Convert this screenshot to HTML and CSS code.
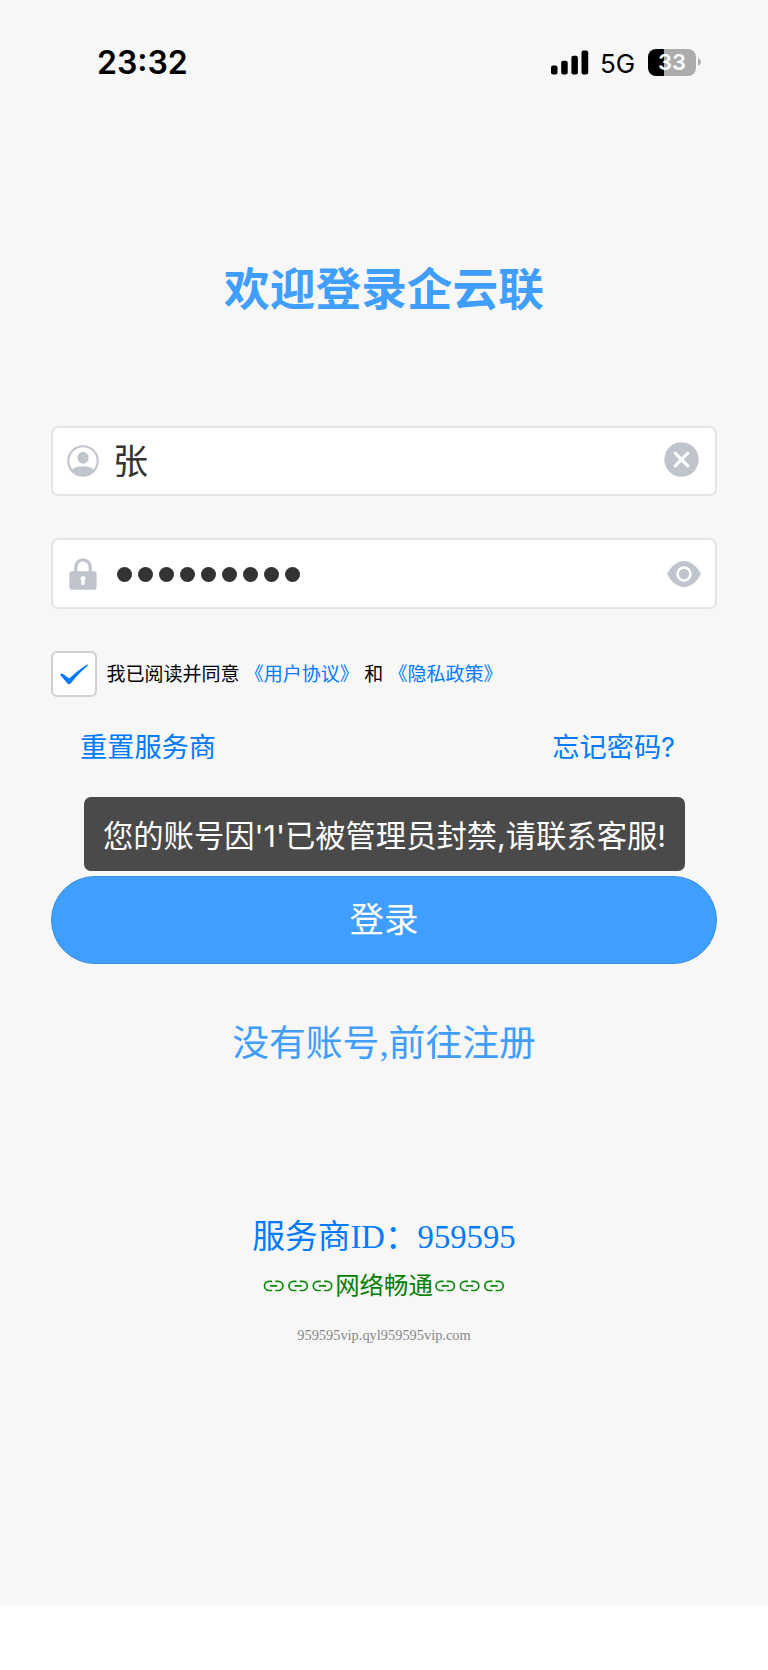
FILE: index.html
```html
<!DOCTYPE html>
<html lang="zh-CN">
<head>
<meta charset="utf-8">
<title>欢迎登录企云联</title>
<link rel="stylesheet" href="styles.css">
</head>
<body>
<main class="screen">
  <header class="status">
    <span class="time">23:32</span>
    <div class="indicators">
      <svg class="signal" width="38" height="25" viewBox="0 0 38 25"><rect x="0" y="15.5" width="6.5" height="9" rx="2"/><rect x="10.2" y="10.7" width="6.5" height="13.8" rx="2"/><rect x="20.4" y="5.7" width="6.5" height="18.8" rx="2"/><rect x="30.5" y="0.5" width="6.7" height="24" rx="2"/></svg>
      <span class="network">5G</span>
      <div class="battery"><span>33</span></div>
      <svg class="tip" width="3" height="8" viewBox="0 0 3 8"><path d="M0 0Q3 1.6 3 4T0 8Z"/></svg>
    </div>
  </header>

  <h1 class="title">欢迎登录企云联</h1>

  <form class="form">
    <div class="field">
      <svg class="user" width="32" height="32" viewBox="0 0 32 32"><circle cx="16" cy="16" r="14.7" fill="none" stroke="#c0c4cc" stroke-width="2.100"/><ellipse cx="16" cy="12.8" rx="5.6" ry="6"/><path d="M4.800 24.600Q9 21.200 16 21.200T27.200 24.600Q22.800 31 16 31T4.800 24.600Z"/></svg>
      <span class="value">张</span>
      <svg class="clear" width="35" height="35" viewBox="0 0 35 35"><circle cx="17.5" cy="17.5" r="17.2"/><path d="M11.2 11.2 23.8 23.8M23.8 11.2 11.2 23.8" stroke="#fff" stroke-width="3.1" stroke-linecap="round"/></svg>
    </div>
    <div class="field password">
      <svg class="lock" width="28" height="32" viewBox="0 0 28 32"><path d="M6.8 15V9.200a7.200 7.400 0 0 1 14.400 0V15" fill="none" stroke="#c0c4cc" stroke-width="3.200"/><rect x=".4" y="13.200" width="27.200" height="18.600" rx="2.400"/><path d="M14 18a2.600 2.600 0 0 1 1.600 4.600V26q0 1-1.600 1t-1.600-1v-3.400A2.600 2.600 0 0 1 14 18Z" fill="#fff"/></svg>
      <div class="dots"><i></i><i></i><i></i><i></i><i></i><i></i><i></i><i></i><i></i></div>
      <svg class="eye" width="34" height="26" viewBox="0 0 34 26"><path d="M0 13C4.500 5 10 0 17 0S29.500 5 34 13C29.500 21 24 26 17 26S4.500 21 0 13Z"/><circle cx="17" cy="13" r="6.400" fill="none" stroke="#fff" stroke-width="2.500"/></svg>
    </div>
    <div class="agreement">
      <span class="checkbox"><svg width="28" height="21" viewBox="0 0 28 21"><path d="M.3 11Q.8 8.700 3 10L9.200 14.400Q17 7 27.300.3L28 1.300Q18.500 9.500 10.500 19.500Q9 21 7.500 19.500Z"/></svg></span>
      <p><span>我已阅读并同意</span><a>《用户协议》</a><span>和</span><a>《隐私政策》</a></p>
    </div>
    <div class="links"><a>重置服务商</a><a>忘记密码?</a></div>
    <div class="login">登录</div>
  </form>

  <a class="register">没有账号,前往注册</a>

  <footer class="provider">
    <div class="provider-id">服务商ID：959595</div>
    <div class="net">
      <svg viewBox="0 0 73 12"><defs><g id="link"><path d="M8.600 1.300H5.600A4.600 4.600 0 0 0 5.600 10.500H8.600M11.800 1.300H14.800A4.600 4.600 0 0 1 14.800 10.500H11.800M6.600 5.900H13.800"/></g></defs><use href="#link" x="1.500"/><use href="#link" x="25.900"/><use href="#link" x="50.300"/></svg>
      <span>网络畅通</span>
      <svg viewBox="0 0 73 12"><use href="#link" x="2"/><use href="#link" x="26.400"/><use href="#link" x="50.800"/></svg>
    </div>
    <div class="domain">959595vip.qyl959595vip.com</div>
  </footer>

  <div class="toast">您的账号因'1'已被管理员封禁,请联系客服!</div>
</main>
</body>
</html>
```
FILE: styles.css
```css
* { box-sizing: border-box; }
body {
  margin: 0;
  background: #fff;
  font-family: Inter, "Noto Sans CJK SC", sans-serif;
}
svg { display: block; flex: none; fill: #c0c4cc; }
.screen {
  position: relative;
  display: flex;
  flex-direction: column;
  height: 1605px;
  padding: 0 51px;
  background: #f7f7f7;
}
.status {
  display: flex;
  justify-content: space-between;
  height: 124px;
  padding: 42px 16px 0 46px;
}
.time { font-size: 32px; font-weight: 600; line-height: 42px; }
.indicators { display: flex; align-items: center; height: 40px; }
.signal { fill: #000; }
.network { width: 48px; margin-left: 11px; font-size: 26px; line-height: 40px; padding-top: 3px; }
.battery {
  width: 48px;
  height: 27px;
  border-radius: 8px;
  background: linear-gradient(90deg, #000 16px, #acacac 16px);
  color: #fff;
  font-size: 22px;
  font-weight: 600;
  line-height: 27px;
  text-align: center;
}
.tip { margin-left: 2px; fill: #acacac; }
.title {
  margin: 128px 0 0;
  color: #409eff;
  font: 600 45.700px/68px "Noto Sans CJK SC", sans-serif;
  text-align: center;
}
.form { margin-top: 106px; }
.field {
  display: flex;
  align-items: center;
  height: 70px;
  padding: 0 16px;
  border: 2px solid #e5e5e5;
  border-radius: 7px;
  background: #fff;
}
.value { flex: 1; margin-left: 14px; color: #333; font-size: 35px; line-height: 60px; padding-bottom: 1px; }
.user { margin-left: -2px; }
.clear { margin-top: -3px; }
.password { height: 71px; margin-top: 42px; padding: 0 14px 0 17px; }
.lock { margin-left: -1px; }
.dots { display: flex; flex: 1; gap: 6px; margin: 2px 0 0 20px; }
.dots i { width: 15px; height: 15px; border-radius: 50%; background: #333; }
.agreement { display: flex; align-items: center; height: 46px; margin-top: 42px; }
.checkbox {
  display: grid;
  place-items: center;
  width: 46px;
  height: 46px;
  border: 2px solid #d1d1d1;
  border-radius: 6px;
  background: #fff;
}
.checkbox svg { margin-top: 1px; fill: #007aff; }
.agreement p { display: flex; gap: 5.300px; margin: 2px 0 0 9.500px; font-size: 19px; line-height: 28px; }
a { color: #007aff; }
.links {
  display: flex;
  justify-content: space-between;
  margin-top: 31px;
  padding: 0 42px 0 29px;
  font-size: 27.200px;
  line-height: 40px;
}
.login {
  height: 88px;
  margin-top: 108px;
  border: 1px solid #3a8ee0;
  border-radius: 44px;
  background: #409eff;
  color: #fff;
  font-size: 34.500px;
  line-height: 86px;
  text-align: center;
}
.register {
  margin-top: 51px;
  color: #409eff;
  font: 36.800px/58px "Liberation Serif", "Noto Sans CJK SC", serif;
  text-align: center;
}
.provider { margin-top: 140px; font-family: "Liberation Serif", "Noto Sans CJK SC", serif; text-align: center; }
.provider-id { color: #007aff; font-size: 32.700px; line-height: 48px; }
.net { display: flex; justify-content: center; align-items: center; margin-top: 6px; color: #008000; font-size: 24.400px; line-height: 36px; }
.net svg { width: 73px; height: 12px; fill: none; stroke: #0b8a0b; stroke-width: 1.700; }
.net span { padding-top: 1px; }
.domain { margin-top: 21px; color: #888; font-size: 14.400px; line-height: 20px; }
.toast {
  position: absolute;
  top: 797px;
  left: 84px;
  width: 601px;
  height: 74px;
  border-radius: 7px;
  background: #4a4a4a;
  color: #fff;
  font-size: 30.300px;
  line-height: 78px;
  text-align: center;
  white-space: nowrap;
}
```
